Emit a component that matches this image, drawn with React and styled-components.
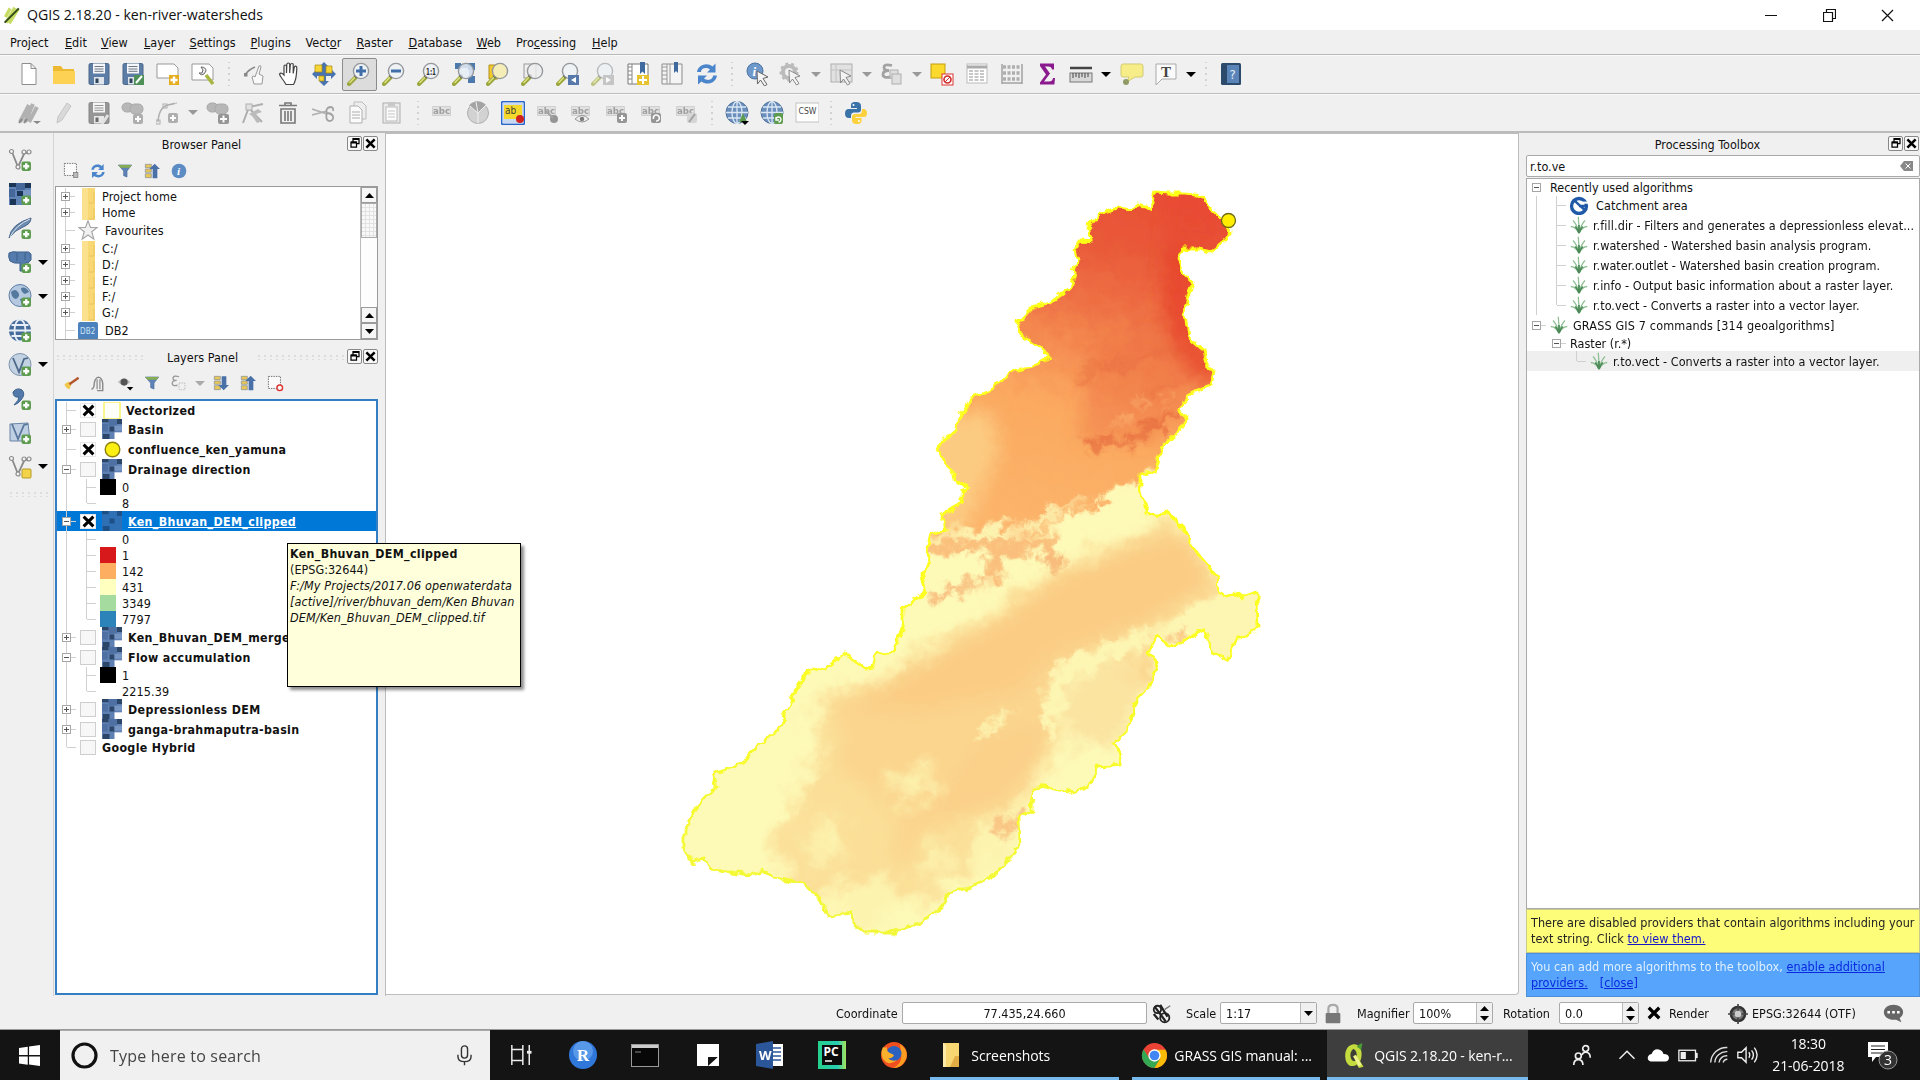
import React from 'react';
import styled, { createGlobalStyle, css } from 'styled-components';

const ui = '"DejaVu Sans Condensed", "DejaVu Sans", Verdana, sans-serif';
const shell = '"Open Sans", "Noto Sans", sans-serif';

const Global = createGlobalStyle`
  * { box-sizing: border-box; }
  html, body { margin: 0; padding: 0; background: #f0f0f0; overflow: hidden; }
  body { font-family: ${ui}; font-stretch: condensed; font-size: 12.5px; color: #111; }
`;

const Window = styled.div`
  width: 1920px; height: 1080px; display: flex; flex-direction: column; background: #f0f0f0; position: relative; overflow: hidden;
`;
const TitleBar = styled.header`
  height: 30px; flex: none; background: #fff; display: flex; align-items: center; padding: 0 3px;
`;
const TitleText = styled.span`
  font-family: ${shell}; font-stretch: normal; font-size: 14.15px; margin-left: 5px; flex: 1; color: #111; padding-bottom: 1px;
`;
const WinButton = styled.div`
  width: 58.5px; height: 30px; display: flex; align-items: center; justify-content: center;
`;
const MenuBar = styled.nav`
  height: 25px; flex: none; display: flex; align-items: center; padding: 1px 0 0 10px; border-bottom: 1px solid #b9b9b9;
`;
const MenuItem = styled.span`
  width: ${p => p.$w}px; font-size: 12.5px; white-space: nowrap;
`;
const ToolBar = styled.div`
  height: ${p => p.$h}px; flex: none; display: flex; align-items: center; padding-left: 11.6px;
  border-bottom: ${p => p.$line}px solid #bcbcbc; box-shadow: inset 0 1px 0 #fafafa;
`;
const ToolButton = styled.div`
  width: 34.8px; height: 34px; flex: none; display: flex; align-items: center; justify-content: center;
  ${p => p.$on && css`background: #dcdcdc; border: 1px solid #8c8c8c; border-radius: 2px; height: 33px;`}
  ${p => p.$dim && css`opacity: .75; filter: grayscale(1);`}
`;
const Arrow = styled.i`
  width: 0; height: 0; flex: none; border: 5px solid transparent; border-top-color: ${p => p.$c || '#000'}; border-bottom: 0;
  margin: 0 ${p => p.$r ?? 3}px 0 ${p => p.$l ?? 2.5}px;
`;
const Separator = styled.span`
  width: ${p => p.$w}px; height: 24px; flex: none;
  background: radial-gradient(circle, #d2d2d2 1px, transparent 1.3px) center / 6px 6px repeat-y;
`;
const Body = styled.main`height: 863px; flex: none; display: flex;`;
const SideBar = styled.aside`
  width: 54px; flex: none; display: flex; flex-direction: column; padding: 10px 0 0 8px; border-right: 1px solid #d4d4d4;
`;
const SideTool = styled.div`height: 34.1px; flex: none; display: flex; align-items: center;`;
const Grip = styled.div`
  width: ${p => p.$w}px; height: 6px; margin-top: ${p => p.$mt || 0}px;
  background: radial-gradient(circle, #dcdcdc 1px, transparent 1.4px) 0 0 / 6px 4px;
`;
const Docks = styled.section`width: 332px; flex: none; display: flex; flex-direction: column; padding-left: 1px; border-right: 1px solid #bdbdbd;`;
const DockTitle = styled.div`
  height: ${p => p.$h}px; width: ${p => p.$w || 323}px; flex: none; display: flex; align-items: center;
`;
const DockName = styled.span`flex: 1; text-align: center; padding-left: ${p => p.$pl}px;`;
const DockButton = styled.span`
  width: 15px; height: 15px; margin-left: 1px; border: 1px solid #888; border-radius: 2px; background: #f8f8f8;
  display: flex; align-items: center; justify-content: center; margin-bottom: 2px;
`;
const DockTools = styled.div`height: ${p => p.$h}px; flex: none; display: flex; align-items: center; padding: 0 0 ${p => p.$pb || 0}px 7px;`;
const MiniTool = styled.span`width: 27px; height: 18px; flex: none; display: flex; align-items: center; justify-content: center; padding-right: 9px;
  svg { flex: none; }`;
const TreeBox = styled.div`
  width: 323px; height: ${p => p.$h}px; flex: none; background: #fff; overflow: hidden; display: flex;
  border: ${p => (p.$focus ? '2px solid #347fc4' : '1px solid #9a9a9a')};
`;
const Rows = styled.div`flex: 1; min-width: 0; display: flex; flex-direction: column; padding-top: ${p => p.$pt || 0}px;`;
const Row = styled.div`
  height: ${p => p.$h || 16}px; flex: none; display: flex; align-items: center; white-space: nowrap; overflow: hidden;
  letter-spacing: ${p => p.$ls || 0}px;
  ${p => p.$sel && css`background: #0078d7; color: #fff;`}
  ${p => p.$hover && css`background: #efefef;`}
`;
const Branch = styled.span`
  width: 20px; height: 100%; flex: none; display: flex; align-items: center; justify-content: center;
  background-repeat: no-repeat;
  background-image: ${p => (p.$v ? 'linear-gradient(#d0d0d0,#d0d0d0)' : 'none')}, ${p => (p.$s ? 'linear-gradient(#d0d0d0,#d0d0d0)' : 'none')};
  background-size: 1px ${p => (p.$v === 'end' ? '50%' : '100%')}, 9px 1px;
  background-position: 9px 0, 10px 50%;
`;
const Toggle = styled.span`
  width: 9px; height: 9px; border: 1px solid #a6a6a6; background: #fff; display: flex; align-items: center; justify-content: center; margin-right: 1px;
`;
const Check = styled.span`
  width: 16px; height: 15px; flex: none; margin: 0 6px 0 3px; border: 1px solid ${p => (p.$on ? '#e8e8e8' : '#cfcfcf')}; background: ${p => (p.$on ? '#fff' : '#f7f7f7')};
  display: flex; align-items: center; justify-content: center;
`;
const IconSlot = styled.span`width: ${p => p.$w}px; height: 20px; margin-right: ${p => p.$m || 0}px; flex: none; display: flex; align-items: center; justify-content: center;`;
const LayerName = styled.span`
  font-weight: bold; font-size: 12.3px; letter-spacing: 0.36px; padding-top: 1px; text-decoration: ${p => (p.$u ? 'underline' : 'none')};
`;
const Swatch = styled.span`width: 16px; height: 16px; margin: 0 6px 0 3px; flex: none; background: ${p => p.$c};`;
const Scroll = styled.div`width: 17px; flex: none; display: flex; flex-direction: column; background: #fdfdfd; border-left: 1px solid #bbb;`;
const ScrollButton = styled.span`
  height: 16px; flex: none; border: 1px solid #9b9b9b; background: #f6f6f6; display: flex; align-items: center; justify-content: center;
`;
const Thumb = styled.span`
  height: 35px; border: 1px solid #aaa; flex: none;
  background: repeating-linear-gradient(90deg, transparent 0 3px, #e2e2e2 3px 4px), repeating-linear-gradient(#f8f8f8 0 3px, #e2e2e2 3px 4px);
`;
const Canvas = styled.div`width: 1133px; height: 862px; flex: none; background: #fff; border: solid #bdbdbd; border-width: 1px 1px 1px 0; border-bottom-right-radius: 4px;`;
const Toolbox = styled.section`
  width: 401px; flex: none; display: flex; flex-direction: column; padding-left: 7px;
`;
const Search = styled.div`
  height: 22px; flex: none; background: #fff; border: 1px solid #aaa; border-radius: 2px; display: flex; align-items: center; justify-content: space-between; padding: 0 6px 0 3px;
`;
const AlgoBox = styled.div`
  height: 731px; flex: none; background: #fff; border: 1px solid #aaa; margin-top: 1px; display: flex; flex-direction: column;
`;
const Notice = styled.div`
  height: 44px; flex: none; padding: 5px 0 0 4px; line-height: 16px; font-size: 12.5px; letter-spacing: 0.05px; white-space: nowrap;
  background: ${p => p.$bg}; color: ${p => p.$c}; border: 1px solid ${p => p.$line};
`;
const Link = styled.span`color: ${p => p.$c || '#1414c8'}; text-decoration: underline; margin-left: ${p => p.$l || 0}px;`;
const Status = styled.footer`
  height: 34px; flex: none; display: flex; align-items: center; padding: 1px 0 0 836px; border-bottom: 1px solid #999;
`;
const Label = styled.span`width: ${p => p.$w}px; flex: none; white-space: nowrap;`;
const Field = styled.div`
  width: ${p => p.$w}px; height: 22px; flex: none; background: #fff; border: 1px solid #aaa; border-radius: 2px; display: flex; align-items: center;
  justify-content: ${p => (p.$center ? 'center' : 'space-between')}; padding-left: ${p => (p.$center ? 0 : 5)}px;
`;
const Spin = styled.span`
  width: 16px; height: 20px; display: flex; flex-direction: column; align-items: center; justify-content: space-around; background: #f0f0f0; border-left: 1px solid #bbb;
`;
const TaskBar = styled.div`
  height: 50px; flex: none; display: flex; background: #141414; color: #fff; font-family: ${shell}; font-stretch: normal;
`;
const Start = styled.div`width: 60px; display: flex; align-items: center; justify-content: center; padding-right: 2px;`;
const TaskSearch = styled.div`
  width: 430px; background: #f0f0f0; border-top: 1px solid #aaa; display: flex; align-items: center; padding: 0 15px 0 11px; color: #454545; font-size: 16px;
`;
const SearchHint = styled.span`flex: 1; margin-left: 12px; letter-spacing: 0.2px;`;
const TaskIcon = styled.div`width: 62.2px; display: flex; align-items: center; justify-content: center;`;
const Task = styled.div`
  width: ${p => p.$w}px; margin-right: ${p => p.$m}px; display: flex; align-items: center; font-size: 14px; white-space: nowrap; padding-left: 9px; letter-spacing: -0.1px;
  border-bottom: 3px solid #76b9ed; padding-top: 3px; background: ${p => (p.$on ? '#3e3e3e' : 'transparent')};
  svg { margin-right: 6px; flex: none; }
`;
const Tray = styled.div`display: flex; align-items: center; padding-left: ${p => p.$l || 0}px; width: ${p => p.$w}px; justify-content: center; flex: none;
  svg { flex: none; }`;
const Clock = styled.div`width: 90px; text-align: center; font-size: 14px; line-height: 22px; padding: 3px 0 0 6px; letter-spacing: -0.1px;`;
const Tooltip = styled.div`
  position: absolute; left: 287px; top: 543px; width: 234px; height: 144px; background: #ffffdc; border: 1px solid #000; padding: 2px 0 0 2px;
  box-shadow: 3px 3px 3px rgba(0,0,0,.45); line-height: 16px; white-space: nowrap;
`;
const TipTitle = styled.div`font-weight: bold; font-size: 12.3px; letter-spacing: 0.34px;`;
const TipPath = styled.div`font-style: italic; letter-spacing: 0.12px;`;

const S = ({ s = 24, children, ...r }) => (
  <svg width={s} height={s} viewBox="0 0 24 24" fill="none" {...r}>{children}</svg>
);
const Plus = ({ x = 13.5, y = 13.5 }) => (
  <g><rect x={x} y={y} width="9.5" height="9.5" rx="2" fill="#5d9b4f" /><path d={`M${x + 4.75} ${y + 1.7}v6M${x + 1.7} ${y + 4.75}h6`} stroke="#fff" strokeWidth="2.4" /></g>
);
const Lens = ({ c = '#eef2f5', children, x = 14, y = 9 }) => (
  <g>
    <path d="M9 15l-7 7" stroke="#9aa63c" strokeWidth="4" strokeLinecap="round" /><path d="M8.5 14.5l-6 6.5" stroke="#dbe07c" strokeWidth="1.5" />
    <path d="M10 13l-2 2" stroke="#222" strokeWidth="3.5" />
    <circle cx={x} cy={y} r="7.6" fill={c} stroke="#94989c" strokeWidth="1.4" />{children}
  </g>
);
const Floppy = () => (
  <g><rect x="2" y="1.5" width="20" height="21" rx="1.5" fill="#5c7da5" stroke="#4a6789" /><rect x="6" y="1.5" width="12" height="10" fill="#f5f7fa" /><path d="M7.5 4.5h9M7.5 7h9M7.5 9.3h9" stroke="#6a7682" /><rect x="7" y="15" width="10" height="7.5" fill="#dfe5ea" /><rect x="8.5" y="16.5" width="3" height="4.5" fill="#2f435a" /></g>
);
const Globe = ({ children }) => (
  <g><circle cx="12" cy="11.5" r="11" fill="#6b8fbd" stroke="#4f7199" /><ellipse cx="12" cy="11.5" rx="5" ry="11" stroke="#dbe7f4" strokeWidth="1.3" /><path d="M12 .5v22M1 11.5h22M3 6h18M3 17h18" stroke="#dbe7f4" strokeWidth="1.3" />{children}</g>
);
const Page = ({ c = '#fff' }) => <path d="M5 1.5h9l5 5v16H5zM14 1.5v5h5" fill={c} stroke="#8d8d8d" />;
const Refresh = () => (
  <g fill="#4b86cc"><path d="M2 10C3 3 12 0 17.500 4.500L20.500 1.500V10.500H12L15 7.500C11 4.500 6 6.500 6 10z" /><path d="M22 13.500C21 21 12 24 6.500 19.500L3 22.500V13.500h9l-3 3c4 3 9 1 9-3z" /></g>
);
const Abc = ({ children }) => (
  <g><path d="M1.500 5.500h18v9h-18z" fill="#dcdcdc" stroke="#c6c6c6" /><text x="2" y="13" fontSize="9" fontFamily="DejaVu Sans" fontWeight="bold" fill="#858585" textLength="17" lengthAdjust="spacingAndGlyphs">abc</text>{children}</g>
);
const Blobs = ({ children }) => <g><rect x="1" y="2" width="11" height="9" rx="4.500" fill="#a5a5a5" stroke="#8f8f8f" /><rect x="9" y="3" width="13" height="10" rx="4.500" fill="#a5a5a5" stroke="#8f8f8f" />{children}</g>;
const Hand = ({ fill = '#fff' }) => <path d="M8 22.500Q6 19 4 16.500T1.500 12q1.500-2 4.500 1V4.500Q6 3 7.200 3T8.500 4.500V11l.3-8.500Q9 1 10.300 1t1.400 1.500V11l.6-8Q12.500 1.500 14 1.500T15.200 3v8.500l1-6Q16.500 4 17.700 4.200t1.100 1.800q-.3 8-1.300 11.500T15.500 22.500z" fill={fill} stroke="#444" strokeWidth="1.2" />;
const Raster = () => (
  <g><rect x="1" y="1" width="22" height="22" fill="#5f83b5" /><path d="M1 1h7v4H1zM17 1h6v5h-6zM9 9h6v5H9zM2 17h6v6H2z" fill="#1a3556" /><path d="M8 1h9v7H8zM1 7h6v8H1z" fill="#456799" /><path d="M15 8h8v6h-8z" fill="#7795c2" /></g>
);
const LayerRaster = () => (
  <g><rect x="0" y="0" width="24" height="24" fill="#5e80b3" /><path d="M0 0h8v4H0zM18 0h6v6h-6zM9 9h6v6H9zM1 18h8v6H1z" fill="#2b4668" /><path d="M8 0h10v8H8zM0 6h7v9H0z" fill="#4f70a2" /><path d="M15 8h9v6h-9z" fill="#7896c3" /><path d="M15 16h9v8h-9z" fill="#fff" /></g>
);
const Vee = () => <g stroke="#8a8a8a" strokeWidth="1.8"><path d="M4 4l6 15 6-13 4-2" /><g fill="#f3f3f3" strokeWidth="1.2"><circle cx="3.500" cy="3.500" r="2" /><circle cx="10" cy="19" r="2" /><circle cx="16" cy="4" r="2" /><circle cx="21" cy="4" r="2" /></g></g>;
const Ptr = () => <path d="M10 8l11 6-5 1.5 4 6-2.500 1.500-4-6-3 4z" fill="#f4f4f4" stroke="#666" />;
const Funnel = () => <g><path d="M2 3h20l-7 9v9l-5-2v-7z" fill="#5f83b8" stroke="#48699b" /><path d="M2 3h20l-3 4H5z" fill="#87ad52" /></g>;
const Collapse = ({ up }) => <g><path d="M2 2h9v5H2zM2 9h9v5H2zM2 16h9v6H2z" fill="#e9c756" stroke="#7f8b99" /><path d={up ? 'M16 1l8 8h-4v14h-7V9H8z' : 'M16 23l8-8h-4V2h-7v13H8z'} fill="#4a70a8" /></g>;
const DashBox = ({ children }) => <g><rect x="2" y="2" width="17" height="17" fill="#fafafa" stroke="#666" strokeDasharray="2 1.500" strokeWidth="1.300" />{children}</g>;
const Cross = ({ s = 12 }) => <S s={s}><path d="M3 3l18 18M21 3L3 21" stroke="#000" strokeWidth="5.500" /></S>;
const Sheet = () => <g><rect x="2" y="2" width="20" height="19" fill="#fff" stroke="#bbb" /><path d="M2 5h20" stroke="#aaa" strokeWidth="3" /><path d="M4 9h16M4 12h16M4 15h16M4 18h16" stroke="#b5b5b5" strokeDasharray="4 1.500" strokeWidth="1.400" /></g>;

const I = {
  new: <Page />,
  open: <><path d="M1 4h8l2 3h11v15H1z" fill="#edb832" /><path d="M1 9h22v13H1z" fill="#fdd154" /></>,
  save: <Floppy />,
  saveas: <><Floppy /><path d="M13 13h10v10H13z" fill="#4d9158" /><path d="M15 21l6-7" stroke="#fff" strokeWidth="2" /></>,
  composer: <><path d="M1 2h17l4 4v10H1z" fill="#fff" stroke="#999" /><rect x="13" y="13" width="10" height="10" fill="#e5ad20" /><path d="M18 14.500v7M14.500 18h7" stroke="#fff" strokeWidth="2.400" /></>,
  manager: <><path d="M1 2h17l4 4v12H1z" fill="#fff" stroke="#999" /><path d="M10 5q5 0 5 4l-2 3q-3 2-5-1l3 0 1-3z" fill="#eee" stroke="#666" /><path d="M15 13l7 9" stroke="#a9b642" strokeWidth="3.500" /></>,
  touch: <><path d="M11 22l-2-7q1-2 3 0l4-11q2-1 2 1l-2 7 4 2-1 8z" fill="#f9f9f9" stroke="#999" /><path d="M2 13q3-5 10-8" stroke="#888" strokeWidth="1.500" /><rect x="1" y="11" width="3.500" height="3.500" fill="#888" /></>,
  hand: <Hand />,
  panto: <><path d="M12 0l5 5h-3v5h5V7l5 5-5 5v-3h-5v5h3l-5 5-5-5h3v-5H5v3l-5-5 5-5v3h5V5H7z" fill="#4a74b0" /><path d="M3 3h7v7H3zM14 4h6v7h-6zM7 14h5v5H7z" fill="#f6d535" stroke="#a88912" strokeWidth=".7" /></>,
  zin: <Lens><path d="M14 4v10M9 9h10" stroke="#3f6ea8" strokeWidth="3" /></Lens>,
  zout: <Lens><path d="M9 9h10" stroke="#3f6ea8" strokeWidth="3" /></Lens>,
  z11: <Lens><text x="9" y="12.500" fontSize="9" fontWeight="bold" fill="#333" fontFamily="DejaVu Sans" textLength="10" lengthAdjust="spacingAndGlyphs">1:1</text></Lens>,
  zfull: <><path d="M3 1h6v6H3zM16 1h7v7h-7zM16 14h7v7h-7z" fill="#4d78ad" /><path d="M9 4h7M19 8v6" stroke="#7e9dc5" strokeWidth="4" /><Lens c="#e6eef6cc" /></>,
  zsel: <><path d="M3 3h9v14H3z" fill="#f5c92c" stroke="#b2901a" /><Lens c="#f4edb8" /></>,
  zlayer: <><rect x="3" y="2" width="12" height="14" fill="#eee" stroke="#999" /><Lens c="#eeeeeecc" /></>,
  zlast: <><Lens /><path d="M12 13h11v10H12z" fill="#5678aa" /><path d="M20 15l-5 3 5 3z" fill="#fff" /></>,
  znext: <g opacity=".6"><Lens /><path d="M12 13h11v10H12z" fill="#aaa" /><path d="M15 15l5 3-5 3z" fill="#fff" /></g>,
  bookmarkNew: <><path d="M2 2h20v20H2z" fill="#fff" stroke="#777" /><path d="M6 2v20M2 5h4M2 9h4M2 13h4M2 17h4" stroke="#888" /><path d="M14 0h5v12l-2.500-2.500L14 12z" fill="#3f6aa0" /><path d="M11 13h12v10H11z" fill="#e6c431" /><path d="M17 14v8M13 18h8" stroke="#fff" strokeWidth="2" /></>,
  bookmarks: <><path d="M2 2h20v20H2z" fill="#f4f4f4" stroke="#8c8c8c" /><path d="M7 2v20M10 2v20M2 5h5M2 9h5M2 13h5M2 17h5" stroke="#999" /><path d="M14 0h4v11l-2-2-2 2z" fill="#3f6aa0" /></>,
  refresh: <Refresh />,
  info: <><circle cx="10" cy="9" r="8" fill="#6f99cb" stroke="#4a73a1" /><text x="7.500" y="14" fontSize="13" fontStyle="italic" fontWeight="bold" fontFamily="Liberation Serif" fill="#fff">i</text><g transform="translate(2 1)"><Ptr /></g></>,
  gear: <><circle cx="10" cy="10" r="6" stroke="#aaa" strokeWidth="4" /><circle cx="10" cy="10" r="8.500" stroke="#aaa" strokeWidth="2" strokeDasharray="3 3" /><Ptr /></>,
  select: <><rect x="1" y="2" width="21" height="18" fill="#ddd" stroke="#999" /><path d="M6 2v18M1 8h21" stroke="#b5b5b5" /><Ptr /></>,
  expr: <><path d="M12 3.500Q4 1.500 4 5.500q0 3 5 3-6 0-6 4 0 4 8 2.500" stroke="#888" strokeWidth="2.800" /><rect x="10" y="8" width="8" height="8" fill="#dadada" stroke="#999" /><rect x="12" y="12" width="9" height="10" fill="#dadada" stroke="#999" /></>,
  desel: <><rect x="1" y="2" width="14" height="14" fill="#fbd92d" stroke="#c3a010" /><rect x="12" y="12" width="11" height="11" fill="#fff" stroke="#d33" /><circle cx="17.500" cy="17.500" r="3.500" stroke="#d02b2b" strokeWidth="1.600" /><path d="M15 20l5-5" stroke="#d02b2b" /></>,
  table: <Sheet />,
  abacus: <><path d="M2 2v20M22 2v20M2 21h20" stroke="#888" strokeWidth="1.500" /><path d="M3 5h18M3 11h18M3 17h18" stroke="#999" strokeWidth="3.500" strokeDasharray="3 1.500" /></>,
  sigma: <path d="M5 1.500h14v6h-2q-.5-3-4-3h-3l5 7-6 8h5q3.500 0 4-3.500h2l-.6 6.500H5v-2l6-8-6-8.500z" fill="#8b1a8f" />,
  ruler: <><path d="M1 6h22" stroke="#444" strokeWidth="2.500" /><rect x="1" y="11" width="22" height="9" fill="#d8d8d8" stroke="#777" /><path d="M4 11v5M7 11v4M10 11v5M13 11v4M16 11v5M19 11v4" stroke="#444" /></>,
  tip: <><path d="M3 2h18q2 0 2 2v9q0 2-2 2h-6l-8 5 2-5H3q-2 0-2-2V4q0-2 2-2z" fill="#f6ec88" stroke="#d3cb74" /><circle cx="6" cy="20" r="3" fill="#8f9a65" /></>,
  text: <><path d="M2 2h20v15H8l-6 6z" fill="#fafafa" stroke="#aaa" /><text x="7" y="15" fontSize="15" fontWeight="bold" fontFamily="Liberation Serif" fill="#444">T</text></>,
  help: <><rect x="2" y="1" width="20" height="22" rx="1.500" fill="#2b4a6c" /><rect x="8" y="3" width="12" height="18" fill="#5a84b8" /><text x="10.500" y="16.500" fontSize="13" fontFamily="DejaVu Sans" fill="#e5eef8">?</text></>,
  edits: <><path d="M3 21L12 4M8 21L16 3M12 21L20 6" stroke="#9c9c9c" strokeWidth="4" /><path d="M2 22l3-4M7 22l3-4" stroke="#666" strokeWidth="2" /><path d="M16 20h8l-4 3z" fill="#666" /></>,
  pencil: <path d="M5 22l1-6L15 2l4 3L10 19z" fill="#d2d2d2" stroke="#b5b5b5" />,
  saveedit: <><Floppy /><path d="M15 23l6-9" stroke="#ddd" strokeWidth="3" /></>,
  addf: <Blobs><rect x="12" y="13" width="10" height="10" rx="2" fill="#999" /><path d="M17 15v6M14 18h6" stroke="#fff" strokeWidth="2" /></Blobs>,
  curve: <><path d="M2 21Q3 6 12 4t8-2" stroke="#999" strokeWidth="1.500" /><rect x="0" y="19" width="4" height="4" stroke="#999" /><rect x="7" y="3" width="4" height="4" stroke="#999" /><rect x="12" y="12" width="10" height="10" rx="2" fill="#999" /><path d="M17 14v6M14 17h6" stroke="#fff" strokeWidth="2" /></>,
  movef: <Blobs><rect x="12" y="13" width="11" height="10" rx="2" fill="#777" /><path d="M17.500 14.500v7M14 18h7" stroke="#fff" strokeWidth="2" /></Blobs>,
  node: <><path d="M2 22L8 6 22 3M8 7l13 14" stroke="#999" strokeWidth="2" /><path d="M8 13l9-5 4 3-6 2 4 8-3 1-5-7z" fill="#aaa" /><rect x="5" y="3" width="6" height="6" fill="#ddd" stroke="#999" /></>,
  trash: <><path d="M3 4.500h18M9 4V2h6v2M5 8h14v14H5zM9 10v10M12 10v10M15 10v10" stroke="#777" strokeWidth="1.600" /></>,
  cut: <><path d="M1 8l15 5M1 14l15-4" stroke="#999" strokeWidth="1.800" /><path d="M16 13q-2-6 3-7 4 0 3 4M16 11q-2 8 2 9 5 0 4-5-2-3-6-3" stroke="#888" strokeWidth="1.800" /></>,
  copy: <><path d="M8 1h8l4 4v13H8z" fill="#eee" stroke="#aaa" /><path d="M4 5h8l4 4v13H4z" fill="#fff" stroke="#999" /><path d="M6 11h8M6 14h8M6 17h8" stroke="#bbb" strokeWidth="1.500" /></>,
  paste: <><rect x="3" y="2" width="17" height="20" fill="#e8e8e8" stroke="#999" /><rect x="6" y="6" width="11" height="14" fill="#fff" stroke="#aaa" /><path d="M8 10h7M8 13h7M8 16h7" stroke="#bbb" /><rect x="8" y="1" width="7" height="4" fill="#bbb" /></>,
  abc: <Abc />,
  pie: <><circle cx="12" cy="12" r="10.500" fill="#c9c9c9" stroke="#999" /><path d="M12 12L3 4.500A11 11 0 0 1 20 4z" fill="#8b8b8b" /><path d="M12 12v10.500M12 12l8-8M12 12L4 5M12 12L10 1" stroke="#eee" /></>,
  abcy: <><rect x="0.500" y="0.500" width="23" height="23" rx="2" fill="#c9d9f2" stroke="#2a65c9" strokeWidth="1.500" /><rect x="3" y="4" width="18" height="14" fill="#f4d92c" /><text x="4" y="13" fontSize="10" fontFamily="DejaVu Sans" fill="#443">ab</text><circle cx="19" cy="18" r="4" fill="#d02020" /></>,
  abcpin: <Abc><circle cx="18" cy="18" r="4" fill="#777" /><path d="M10 10l7 7" stroke="#888" strokeWidth="2" /></Abc>,
  abceye: <Abc><path d="M5 18q7-7 14 0-7 6-14 0z" fill="#eee" stroke="#777" /><circle cx="12" cy="18" r="2.200" fill="#555" /></Abc>,
  abcmove: <Abc><rect x="12" y="12" width="10" height="10" rx="2" fill="#777" /><path d="M17 14v6M14 17h6" stroke="#fff" strokeWidth="2" /></Abc>,
  abcrot: <Abc><rect x="11" y="12" width="10" height="10" rx="2" fill="#777" /><path d="M13.500 18a3 3 0 1 1 2.500 2" stroke="#fff" strokeWidth="1.600" /></Abc>,
  abcedit: <Abc><rect x="12" y="12" width="10" height="10" rx="2" fill="#ccc" /><path d="M14 21l6-8" stroke="#888" strokeWidth="2" /></Abc>,
  web1: <Globe><path d="M14 21l4-9 4 9z" fill="#5d9b4f" /><path d="M16 20h8l-4 4z" fill="#000" /></Globe>,
  web2: <Globe><rect x="14" y="12" width="9" height="11" rx="2" fill="#5d9b4f" /><path d="M16 19a2.500 2.500 0 1 1 2.500 2M16 16v3h3" stroke="#fff" strokeWidth="1.400" /></Globe>,
  csw: <><rect x="1" y="2" width="23" height="19" fill="#fff" stroke="#c2c2c2" /><text x="3.500" y="13" fontSize="8" fontFamily="DejaVu Sans" fill="#444" textLength="18" lengthAdjust="spacingAndGlyphs">CSW</text></>,
  python: <><path d="M12 1C7 1 7 3 7 5v2h6v1H5C2 8 1 10 1 12.500S2 17 5 17h2v-2.500C7 12 9 11.500 11 11.500h3c2 0 3-1 3-3V5c0-3-2-4-5-4z" fill="#3a73a8" /><circle cx="9.500" cy="4" r="1" fill="#fff" /><path d="M12.500 23c5 0 5-2 5-4v-2h-6v-1h8c3 0 3.500-2 3.500-4s-1-4-3.500-4H18v2c0 2.500-2 3-4 3h-3c-2 0-3 1-3 3v3c0 3 2 4 4.500 4z" fill="#fbd13e" /><circle cx="15" cy="20" r="1" fill="#fff" /></>,
};

const row1 = ['new', 'open', 'save', 'saveas', 'composer', 'manager', 17, 'touch', 'hand', 'panto', 'zin', 'zout', 'z11', 'zfull', 'zsel', 'zlayer', 'zlast', 'znext', 'bookmarkNew', 'bookmarks', 'refresh', 14.6, 'info', '~gear', '>g', '~select', '>g', '~expr', '>g', 'desel', 'table', '~abacus', 'sigma', 'ruler', '>', 'tip', 'text', '>', 14, 'help'];
const row2 = ['~edits', '~pencil', '~saveedit', '~addf', '~curve', '>g', '~movef', '~node', 'trash', '~cut', '~copy', '~paste', 16, '~abc', '~pie', 'abcy', '~abcpin', '~abceye', '~abcmove', '~abcrot', '~abcedit', 15.5, 'web1', 'web2', 'csw', 14, 'python'];

const Tools = ({ items }) => items.map((t, i) => {
  if (typeof t === 'number') return <Separator key={i} $w={t} />;
  if (t[0] === '>') return <Arrow key={i} $c={t === '>g' ? '#999' : '#000'} />;
  const id = t.replace('~', '');
  return <ToolButton key={i} $on={id === 'zin'} $dim={t[0] === '~'}><S>{I[id]}</S></ToolButton>;
});

const side = [
  [<><Vee /><Plus /></>],
  [<><Raster /><Plus /></>],
  [<><path d="M1 22Q3 8 23 2q0 6-8 9-8 3-14 11z" fill="#6b8bb0" stroke="#476588" /><path d="M2 21Q8 9 22 3" stroke="#dde6f0" /><Plus /></>],
  [<><path d="M1 3q4-2 8-1h8q4-1 6 2v6l-3 3h-3l-1 8h-4v-8q-6 1-10-2Q0 7 1 3z" fill="#557cac" stroke="#3c618d" /><path d="M9 3v8M17 3v7" stroke="#3c618d" /><Plus /></>, 1],
  [<><circle cx="12" cy="11.500" r="11" fill="#b4c8e0" stroke="#5d7ea6" /><path d="M3 8q4-4 7 0t-2 7q-4 0-5-7zM13 4q5-2 8 4l-4 2q-4-2-4-6zM12 15q5-2 8 1l-6 5z" fill="#54799f" /><Plus /></>, 1],
  [<><circle cx="12" cy="11.500" r="11" fill="#456c9b" /><ellipse cx="12" cy="11.500" rx="5.500" ry="11" stroke="#e8eff7" strokeWidth="1.800" /><path d="M1 11.500h22M3.500 6h17M3.500 17h17" stroke="#e8eff7" strokeWidth="1.800" /><Plus /></>],
  [<><circle cx="12" cy="11.500" r="11" fill="#c3d2e3" stroke="#7c93ad" /><path d="M5 5l6 14 5-13 4-1" stroke="#4b6889" strokeWidth="1.800" /><Plus /></>, 1],
  [<><path d="M5 5q4-5 9-2 4 4-1 10-3 4-7 5 5-5 5-8-6 1-6-5z" fill="#5279a9" stroke="#3d618d" /><Plus /></>],
  [<><path d="M2 3l18-1 2 18H2z" fill="#c0d0e4" stroke="#6884a5" /><path d="M4 3l6 15 6-14 4-1" stroke="#59779a" strokeWidth="1.800" /><Plus /></>],
  [<><Vee /><rect x="14" y="14" width="9" height="9" rx="1" fill="#f3d34a" stroke="#b79b27" /></>, 1],
];

const Expand = ({ open }) => (
  <Toggle><svg width="5" height="5"><path d={open ? 'M0 2.500h5' : 'M0 2.500h5M2.500 0v5'} stroke="#555" /></svg></Toggle>
);
const FolderIcon = () => <svg width="13" height="16"><rect width="13" height="16" fill="#f8d775" /><path d="M7 15h5V4" stroke="#ecc45c" fill="none" /><rect width="6" height="16" fill="#fbe08d" /></svg>;
const Grass = () => (
  <S s={18}><path d="M12 22Q12 10 11 1M12 22Q9 11 4 6M12 22q3-11 8-16M12 22Q7 14 1 14M12 22q5-8 11-8" stroke="#8fbf93" strokeWidth="1.700" /><path d="M12 23Q9 16 7 14M12 23q3-7 5-9M12 23V12" stroke="#4c8a58" strokeWidth="2.300" /></S>
);
const DockButtons = () => (
  <>
    <DockButton><S s={12}><path d="M8 9V3h12v10h-5M4 10h11v10H4z" stroke="#000" strokeWidth="2.500" /><path d="M4 11h11M8 4h12" stroke="#000" strokeWidth="4" /></S></DockButton>
    <DockButton><Cross s={11} /></DockButton>
  </>
);
const Tri = ({ up }) => <svg width="9" height="5"><path d={up ? 'M0 5l4.500-5L9 5z' : 'M0 0l4.500 5L9 0z'} /></svg>;

const browser = [['Project home', 1], ['Home', 1], ['Favourites', 0], ['C:/', 1], ['D:/', 1], ['E:/', 1], ['F:/', 1], ['G:/', 1], ['DB2', 0]];
const layers = [
  { n: 'Vectorized', on: 1, icon: 'box', h: 17 },
  { n: 'Basin', icon: 'raster', t: 'plus' },
  { n: 'confluence_ken_yamuna', on: 1, icon: 'point' },
  { n: 'Drainage direction', icon: 'raster', t: 'minus' },
  { sub: '0', c: '#000' }, { sub: '8', c: '#fff', end: 1 },
  { n: 'Ken_Bhuvan_DEM_clipped', on: 1, icon: 'raster', t: 'minus', sel: 1 },
  { sub: '0', c: '#fff' }, { sub: '1', c: '#d7191c' }, { sub: '142', c: '#fdae61' }, { sub: '431', c: '#ffffbf' }, { sub: '3349', c: '#a6dba0' }, { sub: '7797', c: '#2b83ba', end: 1 },
  { n: 'Ken_Bhuvan_DEM_merged', icon: 'raster', t: 'plus' },
  { n: 'Flow accumulation', icon: 'raster', t: 'minus' },
  { sub: '1', c: '#000' }, { sub: '2215.39', c: '#fff', end: 1 },
  { n: 'Depressionless DEM', icon: 'raster', t: 'plus' },
  { n: 'ganga-brahmaputra-basin', icon: 'raster', t: 'plus' },
  { n: 'Google Hybrid', h: 16, last: 1 },
];
const layerIcon = {
  box: <svg width="18" height="18"><rect x="1" y="0" width="16" height="17" fill="#fffffa" stroke="#f7f36b" strokeWidth="1.500" /></svg>,
  point: <svg width="17" height="17"><circle cx="8.500" cy="8.500" r="7.300" fill="#fbef14" stroke="#8e8212" strokeWidth="1.400" /></svg>,
  raster: <S s={20}><LayerRaster /></S>,
  selected: <S s={20}><rect width="24" height="24" fill="#2f70b4" /><path d="M0 0h8v4H0zM18 0h6v6h-6zM9 9h6v6H9zM1 18h8v6H1z" fill="#1d5087" /></S>,
};

const LayerRow = ({ r }) => {
  if (r.sub !== undefined) {
    return <Row $ls={0.1}><Branch $v="full" /><Branch $v={r.end ? 'end' : 'full'} $s={1} /><Swatch $c={r.c} />{r.sub}</Row>;
  }
  return (
    <Row $h={r.h || 20} $sel={r.sel}>
      <Branch $v={r.last ? 'end' : 'full'} $s={1}>{r.t && <Expand open={r.t === 'minus'} />}</Branch>
      <Check $on={r.on}>{r.on && <Cross s={13} />}</Check>
      {r.icon && <IconSlot $w={20} $m={r.icon === 'box' ? 4 : 6}>{layerIcon[r.sel ? 'selected' : r.icon]}</IconSlot>}
      <LayerName $u={r.sel}>{r.n}</LayerName>
    </Row>
  );
};

const algos = ['r.fill.dir - Filters and generates a depressionless elevat...', 'r.watershed - Watershed basin analysis program.', 'r.water.outlet - Watershed basin creation program.', 'r.info - Output basic information about a raster layer.', 'r.to.vect - Converts a raster into a vector layer.'];

const basin = 'M945 530L941 515 962 503 962 492 968 487 955 480 953 470 942 460 937 450 943 440 955 430 962 415 972 397 993 390 1010 372 1033 367 1050 357 1033 343 1023 335 1017 323 1032 308 1050 303 1070 287 1073 277 1078 260 1075 250 1079 241 1091 242 1089 228 1100 213 1118 207 1130 210 1137 205 1150 208 1155 192 1167 193 1182 193 1197 194 1202 198 1210 208 1223 220 1232 232 1225 240 1210 252 1200 248 1182 248 1177 258 1182 273 1193 283 1188 295 1185 313 1188 337 1203 350 1205 362 1215 372 1212 385 1193 392 1178 408 1186 418 1177 433 1162 447 1155 472 1141 475 1141 493 1148 515 1168 513 1187 532 1189 543 1203 560 1217 577 1219 593 1227 596 1235 593 1242 597 1257 593 1258 627 1248 637 1236 638 1228 660 1213 652 1205 629 1174 647 1156 637 1148 653 1157 663 1150 687 1135 703 1127 730 1113 743 1122 755 1121 765 1099 767 1089 786 1068 793 1044 786 1033 790 1032 810 1019 817 1020 845 1007 862 993 875 972 887 948 893 942 907 921 922 895 933 864 933 852 923 851 913 828 916 823 903 803 883 774 878 762 871 749 875 709 868 704 859 692 863 684 847 684 830 697 807 717 787 713 773 744 763 758 745 778 730 790 703 803 677 813 667 825 670 843 653 866 669 873 668 876 653 893 652 902 628 902 608 925 593 921 575 931 562 927 550 931 535 947 528z';

const MapView = () => (
  <svg width="1131" height="860" viewBox="386 134 1131 860">
    <defs>
      <clipPath id="basin"><path d={basin} /></clipPath>
      <linearGradient id="north" gradientUnits="userSpaceOnUse" x1="1150" y1="190" x2="1065" y2="540">
        <stop offset="0" stopColor="#e94e34" /><stop offset=".18" stopColor="#e95a39" /><stop offset=".34" stopColor="#ee7044" />
        <stop offset=".48" stopColor="#f58d52" /><stop offset=".64" stopColor="#fba960" /><stop offset="1" stopColor="#fcb56b" />
      </linearGradient>
      <linearGradient id="line" x1="0" y1="0" x2="0" y2="1"><stop offset="0" stopColor="#ffff14" /><stop offset=".55" stopColor="#fcff20" /><stop offset="1" stopColor="#f2f838" /></linearGradient>
      <filter id="soft" x="-30%" y="-30%" width="160%" height="160%"><feGaussianBlur stdDeviation="9" /></filter>
      <filter id="rough" x="-20%" y="-20%" width="140%" height="140%">
        <feGaussianBlur stdDeviation="2.500" result="b" /><feTurbulence type="fractalNoise" baseFrequency=".07" numOctaves="4" seed="5" /><feDisplacementMap in="b" scale="30" xChannelSelector="R" yChannelSelector="G" />
      </filter>
      <filter id="patch" x="-40%" y="-40%" width="180%" height="180%">
        <feGaussianBlur stdDeviation="8" result="b" /><feTurbulence type="fractalNoise" baseFrequency=".04" numOctaves="4" seed="9" /><feDisplacementMap in="b" scale="40" xChannelSelector="R" yChannelSelector="G" />
      </filter>
      <filter id="edge" filterUnits="userSpaceOnUse" x="660" y="170" width="620" height="790">
        <feTurbulence type="fractalNoise" baseFrequency=".11" numOctaves="2" seed="3" /><feDisplacementMap in="SourceGraphic" scale="9" xChannelSelector="R" yChannelSelector="G" />
      </filter>
    </defs>
    <g filter="url(#edge)">
      <g clipPath="url(#basin)">
        <rect x="660" y="180" width="620" height="770" fill="#fdf9b7" />
        <g filter="url(#patch)">
          <path d="M1120 545L1175 520 1230 590 1160 625 1055 670 1055 740 1030 790 1015 815 970 830 975 870 940 885 920 905 890 895 870 880 830 890 815 905 790 880 770 850 800 800 820 750 815 700 870 685 1000 610z" fill="#fbdf98" />
        </g>
        <g filter="url(#soft)">
          <path d="M1170 530L1195 535 1215 588 1160 622 1060 668 1048 700 1055 735 1035 770 1005 810 970 815 925 830 905 865 890 860 900 825 860 780 835 770 845 735 830 705 880 688 1000 618 1060 573 1120 550z" fill="#fbd48d" />
          <path d="M1120 552L1180 535 1212 580 1150 618 1050 655 1020 690 920 710 850 705 930 660 1010 615 1060 575z" fill="#fbcc84" />
          <path d="M985 740l60-15-5 40-50 40-60 20 20-40z" fill="#fbd089" />
        </g>
        <g filter="url(#patch)">
          <path d="M885 785l35-22 18 25-30 14zM800 845l25-32 20 28-22 25zM922 858l25-20 0 35-22 6zM975 822l40 5-3 30-38 30zM840 888l50-10 10 30-30 22-28-8z" fill="#fcf3ae" />
          <path d="M1062 680l90-45 0 40-25 55-60 20z" fill="#fbe3a0" />
          <path d="M1130 650l30-8-4 40-20 10z" fill="#fbd68e" />
        </g>
        <g filter="url(#rough)">
          <path d="M900 540L960 528 1040 534 1066 518 1100 500 1125 483 1175 465 1260 400 1260 160 900 160z" fill="url(#north)" />
          <path d="M925 542l130-8 5 38-12 0-6-24-36 14-8 22-14-2 6-32-60 4z" fill="#fabf7c" />
          <path d="M930 594l50-14 10 10-10-4-50 16zM1044 548l12-2 0 26-8 2z" fill="#f8bb7c" />
          <path d="M930 529l100-4-30 7-70 4zM1010 528l40-14 30-14-20 18-30 14zM1070 506l10-10 4 4z" fill="#fcefac" />
          <path d="M1044 690l16-28 60-24 35-15-10 22-50 20-28 18-8 40-14 20z" fill="#fdf5b2" />
          <path d="M1150 634l50-30 18-8 56-14 0 96-70 0-6-46-25 5-22-8z" fill="#fdf5b2" />
          <path d="M978 728l34-22-10 20-20 10zM1000 812l30-18-2 6-24 16z" fill="#fcf0ac" />
          <path d="M994 824l30-12-4 14-20 12zM1170 642l18-16-2 18z" fill="#f9c684" />
        </g>
        <g filter="url(#soft)">
          <path d="M930 420l60-10 10 40-30 70-40 20z" fill="#fccb82" />
          <path d="M1165 245l25 0 10 90 25 30-15 25-25-20-22-50z" fill="#e54029" opacity=".75" />
          <path d="M1170 195l30 0 35 40-30 12-40-10z" fill="#e84730" opacity=".6" />
          <path d="M1090 350l60-20 50 40-40 70-80 0z" fill="#ec6a40" opacity=".4" />
        </g>
        <g filter="url(#rough)">
          <path d="M1082 434l38 8 60-34 4 5-54 34-44 4z" fill="#e0552f" opacity=".5" />
          <path d="M1110 370l60-24 10 4-60 24zM1075 375l50-22 4 6-50 22zM1140 395l36-16 6 4-36 16z" fill="#e4603a" opacity=".3" />
          <path d="M1110 425l18-10 4 8zM1136 406l8-10 4 6zM1160 408l10-8 2 6z" fill="#fbb06e" opacity=".8" />
        </g>
      </g>
      <path d={basin} stroke="url(#line)" strokeWidth="2.800" fill="none" />
    </g>
    <circle cx="1228.500" cy="220.500" r="7" fill="#ffee00" stroke="#6f6a14" strokeWidth="1.300" />
  </svg>
);

const QLogo = ({ s }) => <S s={s}><path d="M11 2C5 3 3 9 4 15s6 8 10 5l2 3 4-1-3-5c3-6 1-16-6-15z" fill="#c5dc3e" /><path d="M11 6q-4 3-2 9 3 4 5 0 1-7-3-9z" fill="#3b3f36" /><path d="M12 12l5 9" stroke="#eef38c" strokeWidth="3" /><path d="M14 4q3-3 5-3l-1 6z" fill="#4a9a35" /></S>;

const menus = [['Project', 55], ['Edit', 36], ['View', 43], ['Layer', 45.5], ['Settings', 61], ['Plugins', 55], ['Vector', 51], ['Raster', 52], ['Database', 68], ['Web', 39.5], ['Processing', 76], ['Help', 40]];
const underlineAt = { Project: 3, Vector: 4, Processing: 3 };

export default function App() {
  return (
    <Window>
      <Global />
      <TitleBar>
        <S s={19}><path d="M4 21L15 2M8 22L19 4M3 14L9 3" stroke="#c6dc62" strokeWidth="4" /><path d="M2 21L20 3" stroke="#304a1b" strokeWidth="2.500" /></S>
        <TitleText>QGIS 2.18.20 - ken-river-watersheds</TitleText>
        <WinButton><svg width="12" height="12"><path d="M0 6.500h12" stroke="#111" /></svg></WinButton>
        <WinButton><svg width="13" height="13" fill="none"><path d="M.5 3.500h9v9h-9zM3.500 3V.5h9v9H10" stroke="#111" strokeWidth="1.200" /></svg></WinButton>
        <WinButton><svg width="13" height="13"><path d="M1 1l11 11M12 1L1 12" stroke="#111" strokeWidth="1.200" /></svg></WinButton>
      </TitleBar>
      <MenuBar>
        {menus.map(([m, w]) => {
          const k = underlineAt[m] || 0;
          return <MenuItem key={m} $w={w}>{m.slice(0, k)}<u>{m[k]}</u>{m.slice(k + 1)}</MenuItem>;
        })}
      </MenuBar>
      <ToolBar $h={39} $line={1}><Tools items={row1} /></ToolBar>
      <ToolBar $h={39} $line={2}><Tools items={row2} /></ToolBar>
      <Body>
        <SideBar>
          {side.map(([icon, arrow], i) => <SideTool key={i}><S>{icon}</S>{arrow && <Arrow $l={6} />}</SideTool>)}
          <Grip $w={40} $mt={7} />
        </SideBar>
        <Docks>
          <DockTitle $h={22}><DockName $pl={2}>Browser Panel</DockName><DockButtons /></DockTitle>
          <DockTools $h={31}>
            <MiniTool><S s={17}><DashBox><rect x="15" y="15" width="6" height="7" fill="#bbb" stroke="#777" /></DashBox></S></MiniTool>
            <MiniTool><S s={16}><Refresh /></S></MiniTool>
            <MiniTool><S s={16}><Funnel /></S></MiniTool>
            <MiniTool><S s={16}><Collapse up /></S></MiniTool>
            <MiniTool><S s={16}><circle cx="12" cy="12" r="11" fill="#5c8cc4" /><text x="9" y="18" fontSize="17" fontStyle="italic" fontWeight="bold" fontFamily="Liberation Serif" fill="#fff">i</text></S></MiniTool>
          </DockTools>
          <TreeBox $h={154}>
            <Rows $pt={1}>
              {browser.map(([n, folder], i) => (
                <Row key={n} $ls={0.1} $h={n === 'Favourites' ? 20.5 : n === 'DB2' ? 20 : 16}>
                  <Branch $v="full" $s={1}>{folder ? <Expand /> : null}</Branch>
                  <IconSlot $w={24} $m={folder ? 2 : 5}>
                    {folder ? <FolderIcon /> : i === 2
                      ? <S s={20}><path d="M12 1l3 8h8l-6.500 5 2.500 9-7-5-7 5 2.500-9L1 9h8z" fill="#f1f1f1" stroke="#a5a5a5" strokeWidth="1.400" /></S>
                      : <svg width="20" height="18"><rect width="20" height="18" rx="2" fill="#4b82bd" /><text x="2" y="12" fontSize="8" fill="#cfe2f5" fontFamily="DejaVu Sans">DB2</text></svg>}
                  </IconSlot>
                  {n}
                </Row>
              ))}
            </Rows>
            <Scroll>
              <ScrollButton><Tri up /></ScrollButton><Thumb /><Rows /><ScrollButton><Tri up /></ScrollButton><ScrollButton><Tri /></ScrollButton>
            </Scroll>
          </TreeBox>
          <DockTitle $h={34}><Grip $w={92} /><DockName $pl={2}>Layers Panel</DockName><Grip $w={90} /><DockButtons /></DockTitle>
          <DockTools $h={25} $pb={7}>
            <MiniTool><S s={17}><path d="M2 13l6-4 4 4-3 7q-5-1-7-7z" fill="#f0c94c" /><path d="M9 13L22 4" stroke="#b5562e" strokeWidth="3.500" /></S></MiniTool>
            <MiniTool><S s={17}><path d="M2 20q4-1 4-8 1-8 6-9 5 1 6 9v10H10" stroke="#888" strokeWidth="2" /><path d="M10 6v14M14 6v14" stroke="#999" strokeWidth="2" /></S></MiniTool>
            <MiniTool><S s={17}><path d="M1 10q9-10 18 0-9 9-18 0z" fill="#bbb" /><circle cx="10" cy="10" r="5" fill="#555" /><path d="M14 17h9l-4.500 5z" fill="#000" /></S></MiniTool>
            <MiniTool><S s={16}><Funnel /></S></MiniTool>
            <MiniTool><S s={18}><path d="M12 3.500Q4 1.500 4 5.500q0 3 5 3-6 0-6 4 0 4 7 2.500" stroke="#999" strokeWidth="1.800" /><path d="M12 12h8v9h-8z" stroke="#aaa" strokeDasharray="2 1.500" /></S></MiniTool>
            <Arrow $c="#aaa" $l={-2} $r={7} />
            <MiniTool><S s={16}><Collapse /></S></MiniTool>
            <MiniTool><S s={16}><Collapse up /></S></MiniTool>
            <MiniTool><S s={17}><DashBox><circle cx="18" cy="18" r="4" fill="#fff" stroke="#d33" strokeWidth="2" /></DashBox></S></MiniTool>
          </DockTools>
          <TreeBox $h={596} $focus>
            <Rows $pt={1}>{layers.map((r, i) => <LayerRow key={i} r={r} />)}</Rows>
          </TreeBox>
        </Docks>
        <Canvas><MapView /></Canvas>
        <Toolbox>
          <DockTitle $h={22} $w={393}><DockName $pl={2}>Processing Toolbox</DockName><DockButtons /></DockTitle>
          <Search>r.to.ve<svg width="13" height="10"><path d="M4 0h9v10H4L0 5z" fill="#888" /><path d="M5.500 2.500l5 5m0-5l-5 5" stroke="#fff" /></svg></Search>
          <AlgoBox>
            <Row $h={17}><Branch><Expand open /></Branch><IconSlot $w={3} />Recently used algorithms</Row>
            <Row $h={19} $ls={0.08}><Branch $v="full" /><Branch $v="full" $s={1} /><IconSlot $w={24} $m={5}><S s={20}><circle cx="12" cy="12" r="9" stroke="#2059a8" strokeWidth="4" /><path d="M5 4l14 13M12 12h10" stroke="#2059a8" strokeWidth="3" /><path d="M13 8l10 0" stroke="#fff" strokeWidth="2.500" /></S></IconSlot>Catchment area</Row>
            {algos.map((a, i) => <Row key={a} $h={20.1} $ls={i ? 0.06 : 0.1}><Branch $v="full" /><Branch $v={i === 4 ? 'end' : 'full'} $s={1} /><IconSlot $w={24} $m={2}><Grass /></IconSlot>{a}</Row>)}
            <Row $h={20} $ls={0.15}><Branch $s={1}><Expand open /></Branch><IconSlot $w={24} $m={2}><Grass /></IconSlot>GRASS GIS 7 commands [314 geoalgorithms]</Row>
            <Row $h={16}><Branch /><Branch $s={1}><Expand open /></Branch><IconSlot $w={3} />Raster (r.*)</Row>
            <Row $h={20} $hover $ls={0.06}><Branch /><Branch /><Branch $v="end" $s={1} /><IconSlot $w={24} $m={2}><Grass /></IconSlot>r.to.vect - Converts a raster into a vector layer.</Row>
          </AlgoBox>
          <Notice $bg="#fdfd7a" $c="#222" $line="#c9c98a">There are disabled providers that contain algorithms including your<br />text string. Click <Link>to view them.</Link></Notice>
          <Notice $bg="#56a4fb" $c="#dff0ff" $line="#4c90d8">You can add more algorithms to the toolbox, <Link $c="#0a28e0">enable additional</Link><br /><Link $c="#0a28e0">providers.</Link><Link $c="#0a28e0" $l={12}>[close]</Link></Notice>
        </Toolbox>
      </Body>
      <Status>
        <Label $w={66}>Coordinate</Label><Field $w={245} $center>77.435,24.660</Field>
        <Label $w={39}><S s={22} transform="translate(4 2)"><path d="M4 4l12 16M10 2l8 13M3 12l5 6" stroke="#222" strokeWidth="2.500" /><circle cx="7" cy="7" r="4" stroke="#222" strokeWidth="2" /><circle cx="15" cy="16" r="5" stroke="#222" strokeWidth="2" /><path d="M15 7l6-4" stroke="#777" strokeWidth="1.500" /></S></Label>
        <Label $w={34}>Scale</Label><Field $w={97}>1:17<Spin><Tri /></Spin></Field>
        <Label $w={40}><S s={22} transform="translate(5 2)"><path d="M7 11V6q0-4 5-4t5 4v5" stroke="#aaa" strokeWidth="2.500" /><rect x="4" y="11" width="16" height="11" rx="1" fill="#777" /></S></Label>
        <Label $w={56}>Magnifier</Label><Field $w={80}>100%<Spin><Tri up /><Tri /></Spin></Field>
        <Label $w={10} /><Label $w={56}>Rotation</Label><Field $w={80}>0.0<Spin><Tri up /><Tri /></Spin></Field>
        <Tray $w={30}><Cross s={14} /></Tray><Label $w={59}>Render</Label>
        <Label $w={24}><S s={20} transform="translate(0 2)"><circle cx="12" cy="12" r="8.500" fill="#777" stroke="#333" strokeWidth="3" /><path d="M12 0v24M0 12h24" stroke="#444" strokeWidth="2" /><circle cx="12" cy="12" r="4" fill="#ccc" /></S></Label>
        <Label $w={131}>EPSG:32644 (OTF)</Label>
        <S s={21}><path d="M12 2c6 0 11 3.500 11 8.500 0 3-2 5.500-4 6.500l2 5-6-3c-8 1-14-3-14-8.500C1 5.500 6 2 12 2z" fill="#666" /><path d="M5 10.500h3M10.500 10.500h3M16 10.500h3" stroke="#fff" strokeWidth="3" /></S>
      </Status>
      <TaskBar>
        <Start><S s={21}><path d="M0 3.500l10-1.500v9.500H0zM11.500 1.800L24 0v11.500H11.500zM0 13h10v9.500L0 21zM11.500 13H24v11l-12.500-1.800z" fill="#fff" /></S></Start>
        <TaskSearch>
          <svg width="27" height="27" fill="none"><circle cx="13.500" cy="13.500" r="11.500" stroke="#111" strokeWidth="3.200" /></svg>
          <SearchHint>Type here to search</SearchHint>
          <S s={21}><rect x="8.500" y="1" width="7" height="14" rx="3.500" stroke="#333" strokeWidth="1.600" /><path d="M4.500 11v2q0 6 7.500 6t7.500-6v-2M12 19v4" stroke="#333" strokeWidth="1.600" /></S>
        </TaskSearch>
        <TaskIcon><S s={22} stroke="#eee" strokeWidth="1.600"><path d="M2 1v22M14 1v22M2 6h12M2 18h12M21 1v22" /><path d="M18.500 9h5" strokeWidth="3" /></S></TaskIcon>
        <TaskIcon><svg width="28" height="28"><circle cx="14" cy="14" r="14" fill="#2f78da" /><circle cx="14" cy="10" r="10" fill="#74aef3" opacity=".6" /><text x="8" y="20" fontSize="17" fill="#fff" fontFamily="Liberation Serif" fontWeight="bold">R</text></svg></TaskIcon>
        <TaskIcon><svg width="28" height="23"><rect x=".5" y=".5" width="27" height="22" fill="#080808" stroke="#999" /><path d="M1 2.500h26" stroke="#ccc" strokeWidth="3" /><path d="M4 8h6" stroke="#888" /></svg></TaskIcon>
        <TaskIcon><svg width="24" height="24"><path d="M1 1h22v22H1z" fill="#fff" /><path d="M12 23v-9h10z" fill="#141414" /><path d="M14 23l8-9v9z" fill="#fff" /></svg></TaskIcon>
        <TaskIcon><svg width="28" height="28"><rect x="14" y="3" width="13" height="22" fill="#fff" /><path d="M16 7h9M16 11h9M16 15h9M16 19h9" stroke="#2b579a" strokeWidth="1.600" /><path d="M0 3l17-3v28L0 25z" fill="#2b579a" /><text x="3" y="19" fontSize="13" fontWeight="bold" fill="#fff" fontFamily="Open Sans">W</text></svg></TaskIcon>
        <TaskIcon><svg width="28" height="28"><defs><linearGradient id="pc" x2="1"><stop stopColor="#26d08b" /><stop offset=".7" stopColor="#27cdb5" /><stop offset="1" stopColor="#a5e35c" /></linearGradient></defs><rect width="28" height="28" fill="url(#pc)" /><rect x="4" y="4" width="20" height="20" fill="#0b0b0b" /><text x="5.500" y="15" fontSize="12" fontWeight="bold" fill="#fff" fontFamily="Open Sans">PC</text><path d="M7 20h7" stroke="#fff" strokeWidth="1.500" /></svg></TaskIcon>
        <TaskIcon><svg width="28" height="28"><circle cx="14" cy="14" r="13" fill="#f0501f" /><path d="M20 3q9 6 6 15-4 9-13 9 10-5 8-14z" fill="#fb9d20" /><circle cx="14" cy="12.500" r="7.500" fill="#2b62c0" /><path d="M3 6q2 1 4 0-1 4 3 6l4 2q-2 4-6 3 3 4 9 2-8 7-14-1Q0 12 3 6z" fill="#f9b02c" /></svg></TaskIcon>
        <Tray $w={5} />
        <Task $w={189} $m={13}><svg width="26" height="26"><path d="M4 1h16v24H4z" fill="#f8d672" /><path d="M16 14l4 0v11h-9z" fill="#e2ad45" /><path d="M4 1l3 2v22H4z" fill="#fde9a8" /></svg>Screenshots</Task>
        <Task $w={188} $m={7}><svg width="27" height="27" viewBox="0 0 28 28"><circle cx="14" cy="14" r="13" fill="#ea4335" /><path d="M2.700 7.500A13 13 0 0 0 14 27l6-10-12-1z" fill="#34a853" /><path d="M14 27A13 13 0 0 0 25.500 8H14l6 9z" fill="#fbbc05" /><circle cx="14" cy="14" r="6.400" fill="#fff" /><circle cx="14" cy="14" r="5" fill="#4285f4" /></svg>GRASS GIS manual: ...</Task>
        <Task $w={201} $m={0} $on><Tray $w={5} /><QLogo s={27} />QGIS 2.18.20 - ken-r...</Task>
        <Tray $w={83} $l={24}><S s={22} stroke="#eee" strokeWidth="1.800"><circle cx="8" cy="13" r="3.200" /><path d="M3 23q0-6 5-6t5 6" /><circle cx="16" cy="5" r="3.200" /><path d="M12 12q1-3 4-3 5 0 5 6" /></S></Tray>
        <Tray $w={32}><S s={18}><path d="M2 17L12 7l10 10" stroke="#eee" strokeWidth="2" /></S></Tray>
        <Tray $w={30}><S s={22}><path d="M4 19q-4-1-3-5 1-3 4-3 2-6 8-5 4 1 5 5 6 0 6 4.500-1 3.500-4 3.500z" fill="#fff" /></S></Tray>
        <Tray $w={31}><S s={21}><rect x="1" y="6" width="19" height="12" stroke="#eee" strokeWidth="1.500" /><rect x="3" y="8" width="6" height="8" fill="#eee" /><path d="M21.500 9v6" stroke="#eee" strokeWidth="2" /></S></Tray>
        <Tray $w={30}><S s={20} stroke="#ddd" strokeWidth="1.700"><path d="M2 21A19 19 0 0 1 22 3M7 21A14 14 0 0 1 22 8M12 21a9 9 0 0 1 10-8M17 21q1-4 5-4" /></S></Tray>
        <Tray $w={26}><S s={22} stroke="#eee" strokeWidth="1.500"><path d="M2 9h4l5-5v16l-5-5H2zM14 9q2 3 0 6M17 7q4 5 0 10M20 4q6 8 0 16" /></S></Tray>
        <Clock>18:30<br />21-06-2018</Clock>
        <Tray $w={65}><svg width="32" height="30"><path d="M1 2h20v15H9l-4 5v-5H1z" fill="#fff" /><path d="M4 6h14M4 9.500h14M4 13h14" stroke="#222" strokeWidth="1.200" /><circle cx="21" cy="20" r="9" fill="#333" stroke="#999" /><text x="17" y="25" fontSize="14" fill="#fff" fontFamily="Open Sans">3</text></svg></Tray>
      </TaskBar>
      <Tooltip>
        <TipTitle>Ken_Bhuvan_DEM_clipped</TipTitle>
        (EPSG:32644)
        <TipPath>F:/My Projects/2017.06 openwaterdata<br />[active]/river/bhuvan_dem/Ken Bhuvan<br />DEM/Ken_Bhuvan_DEM_clipped.tif</TipPath>
      </Tooltip>
    </Window>
  );
}
